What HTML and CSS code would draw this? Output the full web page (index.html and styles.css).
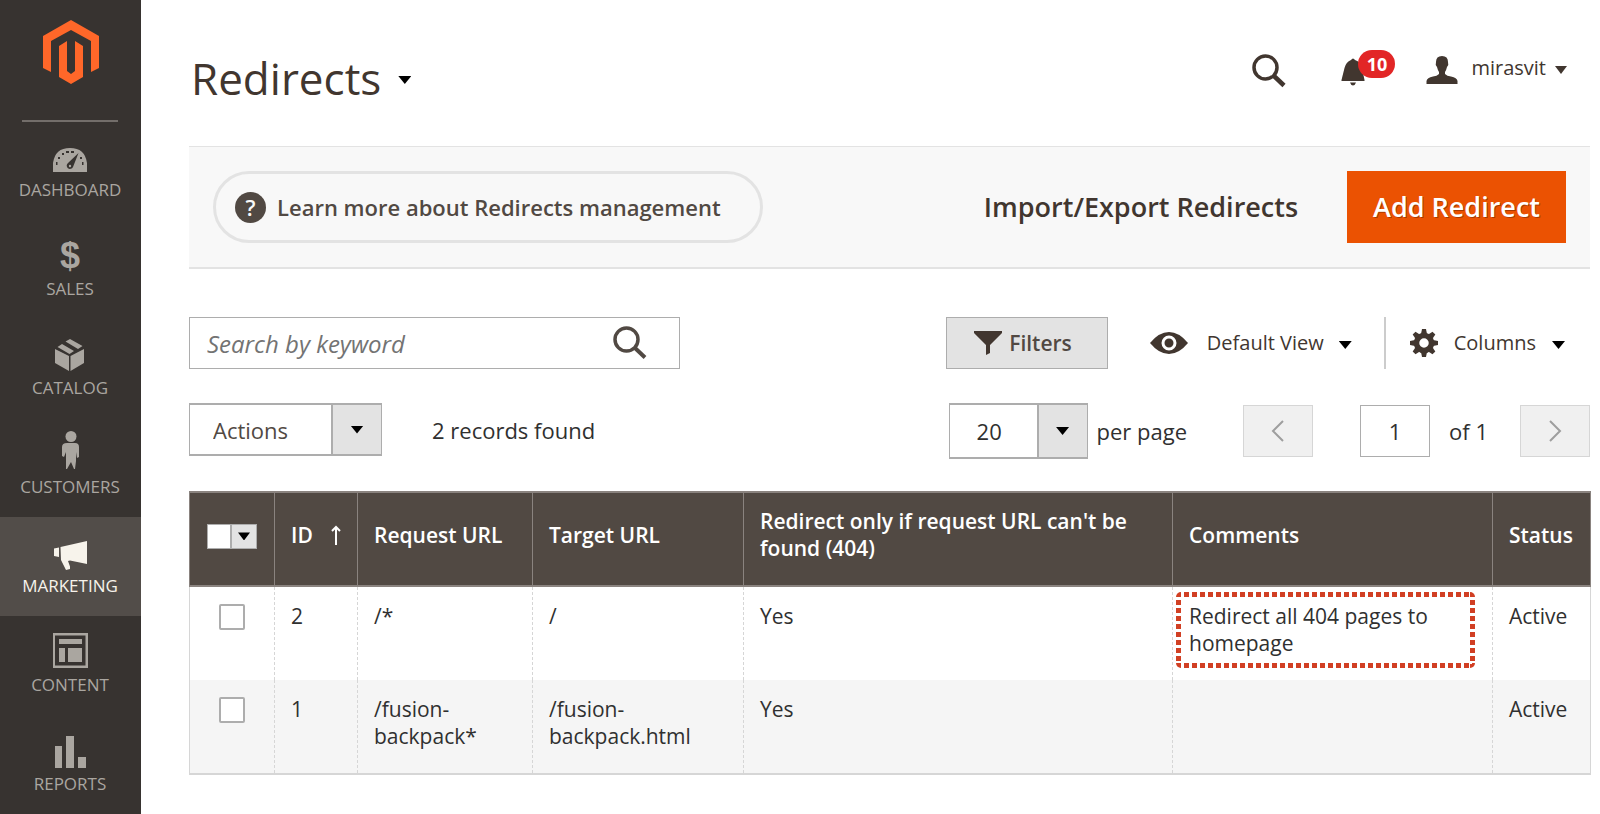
FILE: index.html
```html
<!DOCTYPE html>
<html lang="en">
<head>
<meta charset="utf-8">
<meta name="viewport" content="width=device-width, initial-scale=1">
<title>Redirects</title>
<link rel="stylesheet" href="styles.css">
</head>
<body>
<div class="app">
  <aside class="sidebar">
    <a class="logo" href="#" aria-label="Home">
      <svg width="56" height="64" viewBox="0 0 56 64" fill="#ff6729"><path d="M28 0 56 16V48L48 52V21L28 10 8 21V52L0 48V16z"/><path d="M16 26 24 21V51L28 54 32 51V21L40 26V57L28 64 16 57z"/></svg>
    </a>
    <nav class="menu">
      <a class="menu-item" href="#">
        <svg class="menu-icon" viewBox="0 0 40 44"><path fill="currentColor" d="M3 39V30Q5 15 20 15T37 30V39z"/><g fill="#373330"><path d="M28.500 20 23 34a3.300 3.300 0 1 1-5-4z"/><path d="M16 18h3v2h-3zM21 18h3v2h-3zM12 20h2v2h-2zM8 24h2v2H8zM6 29h1.500v3H6zM32 29h1.500v3H32zM30 24h2v2h-2z"/></g><circle cx="20" cy="33" r="1.200" fill="currentColor"/></svg>
        <span>DASHBOARD</span>
      </a>
      <a class="menu-item" href="#">
        <span class="menu-icon dollar" aria-hidden="true">$</span>
        <span>SALES</span>
      </a>
      <a class="menu-item" href="#">
        <svg class="menu-icon" viewBox="0 0 40 44" fill="currentColor"><path d="M5 18 19 25V40L5 32zM34 18 20.500 25V40L34 32zM7.500 16 12 13 24 20 19.500 23zM15.500 10.500 20 8 32.500 15 28 18z"/></svg>
        <span>CATALOG</span>
      </a>
      <a class="menu-item" href="#">
        <svg class="menu-icon" viewBox="0 0 40 44" fill="currentColor"><circle cx="21" cy="6.500" r="5.500"/><path d="M17 13h8q4 0 4 4v10l-2 1-1-6v9l-1 8h-1l-3-7-4 7h-1V22l-2 5-2-1V17q0-4 5-4z"/></svg>
        <span>CUSTOMERS</span>
      </a>
      <a class="menu-item active" href="#">
        <svg class="menu-icon" viewBox="0 0 40 44" fill="currentColor"><path d="M4 19.500 9 18.500V28L4 27zM10.500 18 37 12V35L20 31.500 18 32 20 37.500V40L16 41 11 31z"/></svg>
        <span>MARKETING</span>
      </a>
      <a class="menu-item" href="#">
        <svg class="menu-icon" viewBox="0 0 40 44" fill="currentColor"><path fill-rule="evenodd" d="M3 5h35v35H3zM5 7.500v30h30.500v-30z"/><path d="M9 11h23v5H9zM9 20h6v14H9zM18 20h14v14H18z"/></svg>
        <span>CONTENT</span>
      </a>
      <a class="menu-item" href="#">
        <svg class="menu-icon" viewBox="0 0 40 44" fill="currentColor"><path d="M5 19h7v22H5zM16 9h8v32h-8zM28 30h8v11h-8z"/></svg>
        <span>REPORTS</span>
      </a>
    </nav>
  </aside>

  <main class="main">
    <header class="header">
      <h1 class="title"><button class="plain title-button" type="button">Redirects <i class="caret"></i></button></h1>
      <div class="header-tools">
        <button class="plain" type="button" aria-label="Search"><svg width="34" height="34" viewBox="0 0 34 34" fill="none" stroke="#41362f"><circle cx="13.500" cy="13.500" r="11.500" stroke-width="3.500"/><path d="M22 22 32 31.500" stroke-width="4.500"/></svg></button>
        <button class="plain bell" type="button" aria-label="Notifications"><svg width="24" height="28" viewBox="0 0 24 28" fill="#41362f"><path d="M10 2q2-3 4 0 6 2 7 8l2.500 12v1H.5V22L3.500 10Q5 4 10 2zM9 24.500h6q-1 3-3 3t-3-3z"/></svg><span class="badge">10</span></button>
        <button class="plain account" type="button"><svg width="32" height="28" viewBox="0 0 32 28" fill="#41362f"><path d="M16 0q6 0 6 6 1 3-1 5-1 4-2 5v2q2 2 6 2.500 6 1 6.500 4.500V28H.5V25Q1 21.500 7 20.500q4-.5 6-2.500v-2q-1-1-2-5-2-2-1-5 0-6 6-6z"/></svg><span>mirasvit</span><i class="caret small"></i></button>
      </div>
    </header>

    <section class="page-actions">
      <a class="learn" href="#"><span class="question" aria-hidden="true">?</span>Learn more about Redirects management</a>
      <div class="page-buttons">
        <button class="plain import" type="button">Import/Export Redirects</button>
        <button class="add" type="button">Add Redirect</button>
      </div>
    </section>

    <section class="toolbar">
      <div class="search">
        <input type="search" placeholder="Search by keyword" aria-label="Search by keyword">
        <button class="plain" type="button" aria-label="Search"><svg width="34" height="34" viewBox="0 0 34 34" fill="none" stroke="#514943"><circle cx="13.500" cy="13.500" r="11.500" stroke-width="3.500"/><path d="M22 22 32 31.500" stroke-width="4"/></svg></button>
      </div>
      <div class="view-tools">
        <button class="filters" type="button"><svg width="28" height="24" viewBox="0 0 28 24" fill="#41362f"><path d="M0 0h28v2L16 14v8l-4 2V14L0 2z"/></svg>Filters</button>
        <button class="plain view" type="button"><svg width="38" height="22" viewBox="0 0 38 22"><path fill="#41362f" d="M0 11Q9 0 19 0T38 11Q29 22 19 22T0 11z"/><circle cx="19" cy="11" r="6" fill="#41362f" stroke="#fff" stroke-width="3"/><circle cx="19" cy="11" r="3" fill="#41362f"/></svg><span>Default View</span><i class="caret"></i></button>
        <button class="plain columns" type="button"><svg width="28" height="28" viewBox="-14 -14 28 28" fill="#41362f"><defs><path id="tooth" d="M-3-9-2-14H2L3-9z"/></defs><circle r="7.500" fill="none" stroke="#41362f" stroke-width="5.500"/><use href="#tooth"/><use href="#tooth" transform="rotate(45)"/><use href="#tooth" transform="rotate(90)"/><use href="#tooth" transform="rotate(135)"/><use href="#tooth" transform="rotate(180)"/><use href="#tooth" transform="rotate(225)"/><use href="#tooth" transform="rotate(270)"/><use href="#tooth" transform="rotate(315)"/></svg><span>Columns</span><i class="caret"></i></button>
      </div>
    </section>

    <section class="toolbar paging">
      <div class="bulk">
        <div class="select actions"><select aria-label="Actions"><option>Actions</option></select><span class="select-arrow"><i class="caret"></i></span></div>
        <span>2 records found</span>
      </div>
      <div class="pager">
        <div class="select size"><select id="per-page"><option>20</option></select><span class="select-arrow"><i class="caret"></i></span></div>
        <label class="per-page" for="per-page">per page</label>
        <button class="step" type="button" disabled aria-label="Previous page"><svg width="14" height="22" viewBox="0 0 14 22"><path d="M12 1 2 11 12 21"/></svg></button>
        <input class="page" id="page" type="text" value="1" aria-label="Page">
        <label class="page-count" for="page">of 1</label>
        <button class="step" type="button" disabled aria-label="Next page"><svg width="14" height="22" viewBox="0 0 14 22"><path d="M2 1 12 11 2 21"/></svg></button>
      </div>
    </section>

    <table class="grid">
      <colgroup><col class="c-check"><col class="c-id"><col class="c-request"><col class="c-target"><col class="c-only"><col class="c-comments"><col class="c-status"></colgroup>
      <thead>
        <tr>
          <th class="check"><div class="multi"><input type="checkbox" aria-label="Select all"><button type="button" aria-label="Selection options"><i class="caret small dark"></i></button></div></th>
          <th><span class="sorted">ID <svg width="10" height="20" viewBox="0 0 10 20" fill="none" stroke="#fff" stroke-width="2"><path d="M5 20V2M1 6 5 2 9 6"/></svg></span></th>
          <th>Request URL</th>
          <th>Target URL</th>
          <th>Redirect only if request URL can't be found (404)</th>
          <th>Comments</th>
          <th>Status</th>
        </tr>
      </thead>
      <tbody>
        <tr>
          <td class="check"><input class="box" type="checkbox" aria-label="Select 2"></td>
          <td>2</td><td>/*</td><td>/</td><td>Yes</td>
          <td class="marked"><div class="mark">Redirect all 404 pages to homepage</div></td>
          <td>Active</td>
        </tr>
        <tr>
          <td class="check"><input class="box" type="checkbox" aria-label="Select 1"></td>
          <td>1</td><td>/fusion-backpack*</td><td>/fusion-backpack.html</td><td>Yes</td><td></td><td>Active</td>
        </tr>
      </tbody>
    </table>
  </main>
</div>
</body>
</html>
```
FILE: styles.css
```css
* { box-sizing: border-box; }
body { margin: 0; background: #fff; color: #303030; font: 22px/28px "Open Sans", "Noto Sans", sans-serif; }
button, input, select { font: inherit; color: inherit; margin: 0; border-radius: 0; }
button { cursor: pointer; }
svg { display: block; flex: none; }
.plain { background: none; border: 0; padding: 0; }
.app { display: flex; min-height: 100vh; }

.sidebar { flex: none; width: 141px; background: #373330; }
.logo { display: flex; justify-content: center; height: 121px; padding-top: 20px; }
.menu { position: relative; }
.menu::before { content: ""; position: absolute; top: -1px; left: 22px; right: 23px; height: 2px; background: #736e6a; }
.menu-item { display: flex; flex-direction: column; align-items: center; gap: 3px; padding: 12px 1px 20px 0; color: #aaa6a0; font-size: 17px; line-height: 20px; text-decoration: none; }
.menu-item.active { background: #524d49; color: #f7f3eb; }
.menu-icon { width: 40px; height: 44px; }
.dollar { font: bold 36px/48px "Liberation Sans", Arial, sans-serif; text-align: center; }

.main { flex: 1; min-width: 0; padding: 0 10px 40px 48px; }
.header { display: flex; justify-content: space-between; padding: 48px 23px 38px 0; }
.title { margin: 0; font-size: 44px; line-height: 60px; font-weight: 400; color: #41362f; }
.title-button { display: flex; align-items: center; gap: 17px; padding-left: 2px; }
.caret { flex: none; width: 13px; height: 8px; background: #000; clip-path: polygon(0 0, 100% 0, 50% 100%); }
.title .caret, .view .caret, .columns .caret { margin-top: 4px; }
.caret.small { width: 12px; height: 8px; background: #41362f; }
.caret.dark { background: #000; }
.header-tools { display: flex; align-items: flex-start; padding-top: 6px; }
.bell { position: relative; margin: 4px 0 0 55px; }
.badge { position: absolute; left: 17px; top: -8px; width: 37px; height: 28px; border-radius: 14px; background: #e22626; color: #fff; font-size: 18px; line-height: 28px; font-weight: 700; }
.account { display: flex; align-items: center; margin-left: 61px; font-size: 20px; color: #41362f; }
.account span { margin: 0 9px 4px 13px; }

.page-actions { display: flex; justify-content: space-between; align-items: center; padding: 24px; background: #f8f8f8; border-top: 1px solid #e3e3e3; border-bottom: 2px solid #e3e3e3; }
.learn { display: flex; align-items: center; height: 72px; padding: 0 39px 0 19px; border: 3px solid #e3e3e3; border-radius: 36px; font-weight: 600; color: #514943; text-decoration: none; }
.question { width: 31px; height: 31px; margin-right: 11px; border-radius: 50%; background: #514943; color: #f8f8f8; text-align: center; line-height: 31px; }
.page-buttons { display: flex; align-items: center; gap: 49px; }
.import, .add { font-size: 27px; font-weight: 600; color: #41362f; }
.add { height: 72px; padding: 0 26px; border: 0; background: #eb5202; color: #fff; text-shadow: 1px 1px 0 rgba(0, 0, 0, .3); }

.toolbar { display: flex; justify-content: space-between; margin-top: 48px; }
.search { display: flex; align-items: center; width: 491px; height: 52px; border: 1px solid #adadad; padding: 0 32px 0 17px; }
.search input { flex: 1; min-width: 0; height: 40px; border: 0; outline: 0; padding: 0; background: none; appearance: none; font-size: 24px; }
.search input::placeholder { color: #737373; font-style: italic; opacity: 1; }
.view-tools { display: flex; color: #41362f; }
.filters { display: flex; align-items: center; gap: 7px; height: 52px; padding: 0 35px 0 27px; border: 1px solid #adadad; background: #e3e3e3; color: #514943; font-size: 21px; font-weight: 600; }
.view, .columns { display: flex; align-items: center; font-size: 20px; color: #41362f; }
.view { padding: 0 32px 0 42px; }
.view span { margin: 0 15px 0 19px; }
.columns { padding: 0 25px 0 24px; border-left: 2px solid #ccc; }
.columns span { margin: 0 16px; }

.paging { margin-top: 34px; }
.bulk, .pager { display: flex; align-items: center; }
.bulk { gap: 50px; height: 53px; }
.select { position: relative; border: 2px solid #adadad; border-width: 2px 1px; background: #fff; }
.select select { display: block; width: 100%; height: 100%; border: 0; padding: 0 52px 0 23px; background: none; appearance: none; color: #514943; }
.select-arrow { position: absolute; top: 0; right: 0; bottom: 0; width: 50px; display: flex; align-items: center; justify-content: center; border-left: 2px solid #adadad; background: #e3e3e3; pointer-events: none; }
.actions { width: 193px; height: 53px; }
.size { width: 139px; height: 56px; }
.size select { padding-left: 27px; color: #303030; }
.per-page { margin: 0 56px 0 9px; }
.step, .page { width: 70px; height: 52px; border: 1px solid #adadad; }
.step { display: flex; align-items: center; justify-content: center; background: #f0f0f0; border-color: #d6d6d6; }
.step path { fill: none; stroke: #9e9e9e; stroke-width: 2; }
.page { margin-left: 47px; padding: 0; text-align: center; background: #fff; }
.page-count { margin: 0 32px 0 19px; }

.grid { width: 100%; margin-top: 32px; table-layout: fixed; border-collapse: collapse; font-size: 21px; line-height: 27px; border-bottom: 2px solid #d6d6d6; }
.c-check { width: 85px; } .c-id { width: 83px; } .c-request { width: 175px; } .c-target { width: 211px; }
.c-only { width: 429px; } .c-comments { width: 320px; } .c-status { width: 98px; }
th { height: 94px; padding: 0 16px 8px; background: #514943; border: 1px solid #8a837f; border-top-width: 2px; border-bottom-width: 2px; color: #fff; font-weight: 600; text-align: left; vertical-align: middle; }
td { height: 94px; padding: 16px 16px; border: 1px dashed #d6d6d6; border-top: 0; border-bottom: 0; vertical-align: top; }
td:first-child { border-left-style: solid; }
td:last-child { border-right-style: solid; }
tbody tr:nth-child(2) { background: #f5f5f5; }
th:last-child, td:last-child { padding-right: 0; }
.check { text-align: center; }
td.check { padding-top: 17px; }
.multi { display: inline-flex; width: 50px; height: 25px; border: 1px solid #adadad; background: #fff; vertical-align: middle; }
.multi input { flex: 1; appearance: none; background: #fff; }
.multi button { display: flex; align-items: center; justify-content: center; width: 26px; padding: 0; border: 0; border-left: 2px solid #adadad; background: #e3e3e3; }
.sorted { display: flex; align-items: center; gap: 18px; }
.box { display: block; width: 26px; height: 26px; margin: 0 auto; appearance: none; border: 2px solid #adadad; border-radius: 2px; background: #fff; }
td.marked { padding: 5px 17px 0 3px; }
.mark { height: 76px; padding: 11px 12px 0 13px; border-radius: 5px;
  background:
    repeating-linear-gradient(90deg, #d13f23 0 5px, transparent 5px 8px) top / 100% 5px no-repeat,
    repeating-linear-gradient(90deg, #d13f23 0 5px, transparent 5px 8px) bottom / 100% 5px no-repeat,
    repeating-linear-gradient(180deg, #d13f23 0 5px, transparent 5px 8px) left / 5px 100% no-repeat,
    repeating-linear-gradient(180deg, #d13f23 0 5px, transparent 5px 8px) right / 5px 100% no-repeat; }
```
